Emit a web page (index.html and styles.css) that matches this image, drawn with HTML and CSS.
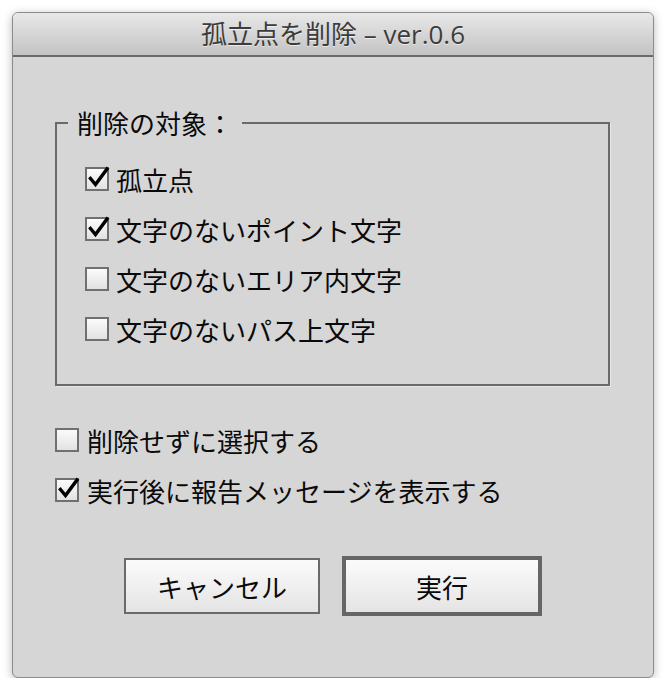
FILE: index.html
```html
<!DOCTYPE html>
<html lang="ja">
<head>
    <meta charset="UTF-8">
    <meta name="viewport" content="width=device-width, initial-scale=1.0">
    <title>孤立点を削除</title>
    <link rel="stylesheet" href="styles.css">
</head>
<body>
    <div class="window">
        <div class="titlebar">孤立点を削除 – ver.0.6</div>
        <div class="content">
            <fieldset class="group">
                <legend>削除の対象：</legend>
                <label class="row"><span class="box checked"><svg viewBox="0 0 24 24"><path d="M4.5 12.5 L9.5 18.5 L21 3"/></svg></span>孤立点</label>
                <label class="row"><span class="box checked"><svg viewBox="0 0 24 24"><path d="M4.5 12.5 L9.5 18.5 L21 3"/></svg></span>文字のないポイント文字</label>
                <label class="row"><span class="box"></span>文字のないエリア内文字</label>
                <label class="row"><span class="box"></span>文字のないパス上文字</label>
            </fieldset>

            <div class="options">
                <label class="row"><span class="box"></span>削除せずに選択する</label>
                <label class="row"><span class="box checked"><svg viewBox="0 0 24 24"><path d="M4.5 12.5 L9.5 18.5 L21 3"/></svg></span>実行後に報告メッセージを表示する</label>
            </div>

            <div class="buttons">
                <button class="cancel">キャンセル</button>
                <button class="ok">実行</button>
            </div>
        </div>
    </div>
</body>
</html>
```

FILE: styles.css
```css
body { margin: 0; background: #fff; font-family: "Noto Sans CJK JP", sans-serif; }

.window {
    margin: 12px 0 0 12px;
    width: 640px;
    height: 664px;
    border: 1px solid #8c8c8c;
    border-radius: 6px;
    background: #d6d6d6;
    box-shadow: 0 2px 10px rgba(0,0,0,0.28);
    overflow: hidden;
}

.titlebar {
    height: 42px;
    line-height: 42px;
    border-bottom: 2px solid #6a6a6a;
    background: linear-gradient(#e8e8e8, #c3c3c3);
    text-align: center;
    font-family: "Open Sans", "Noto Sans CJK JP", sans-serif;
    font-size: 26px;
    color: #3c3c3c;
    text-shadow: 0 1px 0 rgba(255,255,255,0.6);
}

.content { padding: 0 42px; }

.group {
    margin: 51px 0 0 0;
    width: 551px;
    padding: 16px 0 30px 0;
    border: 2px solid #6a6a6a;
    box-shadow: 1px 1px 0 #e6e6e6;
    box-sizing: content-box;
}
.group legend {
    margin-left: 11px;
    padding: 0 9px;
    font-size: 26px;
    line-height: 30px;
    color: #0a0a0a;
}
.group .row { margin-left: 28px; }

.row {
    display: flex;
    align-items: center;
    gap: 7px;
    height: 50px;
    font-size: 26px;
    color: #0a0a0a;
}

.box {
    width: 20px;
    height: 20px;
    border: 2px solid #707070;
    background: linear-gradient(#fbfbfb, #e2e2e2);
    position: relative;
    flex: none;
}
.box svg {
    position: absolute;
    left: -1px;
    top: -3px;
    width: 24px;
    height: 24px;
    fill: none;
    stroke: #000;
    stroke-width: 3.4;
    stroke-linecap: square;
}

.options { margin-top: 29px; }
.options .row { gap: 8px; }

.buttons {
    margin-top: 41px;
    display: flex;
    justify-content: center;
    align-items: center;
    gap: 22px;
}
button {
    font-family: "Noto Sans CJK JP", sans-serif;
    font-size: 26px;
    color: #0a0a0a;
    background: linear-gradient(#fbfbfb, #e4e4e4);
    padding: 0;
}
.cancel { width: 196px; height: 56px; border: 2px solid #6a6a6a; }
.ok { width: 200px; height: 60px; border: 4px solid #666; }
```
